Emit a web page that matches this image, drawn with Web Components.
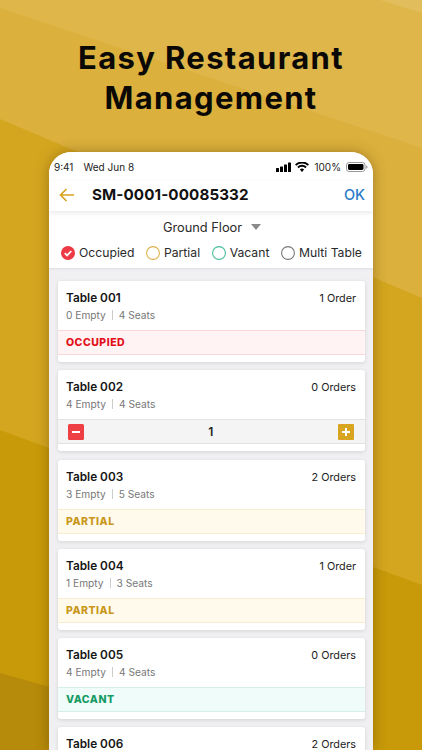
<!DOCTYPE html>
<html>
<head>
<meta charset="utf-8">
<style>
  html, body { margin: 0; padding: 0; height: 100%; overflow: hidden; }
  body { font-family: "Inter", "Liberation Sans", sans-serif; }
</style>
</head>
<body>
<promo-screen>
  <span slot="title">Easy Restaurant<br>Management</span>
  <phone-frame>
    <status-bar></status-bar>
    <app-header code="SM-0001-00085332"></app-header>
    <floor-filter floor="Ground Floor"></floor-filter>
    <table-list>
      <table-card name="Table 001" orders="1 Order" empty="0 Empty" seats="4 Seats" state="occupied"></table-card>
      <table-card name="Table 002" orders="0 Orders" empty="4 Empty" seats="4 Seats" state="stepper"></table-card>
      <table-card name="Table 003" orders="2 Orders" empty="3 Empty" seats="5 Seats" state="partial"></table-card>
      <table-card name="Table 004" orders="1 Order" empty="1 Empty" seats="3 Seats" state="partial"></table-card>
      <table-card name="Table 005" orders="0 Orders" empty="4 Empty" seats="4 Seats" state="vacant"></table-card>
      <table-card name="Table 006" orders="2 Orders"></table-card>
    </table-list>
  </phone-frame>
</promo-screen>

<script>
class PromoScreen extends HTMLElement {
  constructor() {
    super();
    this.attachShadow({ mode: "open" });
    this.shadowRoot.innerHTML = `
      <style>
        :host { display: flex; flex-direction: column; align-items: center; position: relative; width: 422px; height: 750px; overflow: hidden; background: #c89a09; }
        svg { position: absolute; inset: 0; }
        h1 { position: relative; margin: 0; padding-top: 38px; height: 152px; box-sizing: border-box; text-align: center; font: 700 31px/40px "Inter", sans-serif; letter-spacing: 1.35px; color: #0b0905; }
        .phone { position: relative; }
      </style>
      <svg width="422" height="750" viewBox="0 0 422 750">
        <rect width="422" height="750" fill="#c89a09"/>
        <polygon points="0,0 422,0 422,585 0,430" fill="#d4a61f"/>
        <polygon points="0,0 422,0 422,298 0,119" fill="#dbb03c"/>
        <polygon points="0,8 0,0 422,0 422,148" fill="#deb64a"/>
        <polygon points="380,0 422,0 422,13" fill="#e2bd5c"/>
        <polygon points="0,673 60,690 60,750 0,750" fill="#b68a0a"/>
      </svg>
      <h1><slot name="title"></slot></h1>
      <div class="phone"><slot></slot></div>`;
  }
}

class PhoneFrame extends HTMLElement {
  constructor() {
    super();
    this.attachShadow({ mode: "open" });
    this.shadowRoot.innerHTML = `
      <style>
        :host { display: block; width: 324px; height: 598px; box-sizing: border-box; background: #f0f0f3; border-radius: 22px 22px 0 0; overflow: hidden; box-shadow: 0 0 14px rgba(80,50,0,.4); font-family: "Inter", "Liberation Sans", sans-serif; }
      </style>
      <slot></slot>`;
  }
}

class StatusBar extends HTMLElement {
  constructor() {
    super();
    this.attachShadow({ mode: "open" });
    this.shadowRoot.innerHTML = `
      <style>
        :host { display: flex; align-items: center; height: 29px; padding: 0 5px; box-sizing: border-box; background: #fff; font: 400 10px "Inter", sans-serif; color: #222; }
        .date { margin-left: 10px; }
        .right { margin-left: auto; display: flex; align-items: center; gap: 4px; }
        svg { display: block; }
      </style>
      <span>9:41</span><span class="date">Wed Jun 8</span>
      <div class="right">
        <svg width="15" height="10" viewBox="0 0 15 10"><rect x="0" y="6" width="3" height="4" rx=".6"/><rect x="4" y="4.5" width="3" height="5.5" rx=".6"/><rect x="8" y="2.5" width="3" height="7.5" rx=".6"/><rect x="12" y="0.5" width="3" height="9.5" rx=".6"/></svg>
        <svg width="14" height="10" viewBox="0 0 14 10"><path d="M7 10 4.900 7.600a3 3 0 0 1 4.200 0zM3.600 6.200 2.300 4.800a6.700 6.700 0 0 1 9.400 0l-1.300 1.400a4.900 4.900 0 0 0-6.800 0zM1.300 3.800 0 2.400a9.900 9.900 0 0 1 14 0l-1.300 1.400a8 8 0 0 0-11.400 0z"/></svg>
        <span style="margin-left:1px">100%</span>
        <svg width="22" height="10" viewBox="0 0 22 10" style="margin-left:1px"><rect x=".5" y=".5" width="18.500" height="9" rx="2.600" fill="none" stroke="#999"/><rect x="2" y="2" width="15.500" height="6" rx="1.400"/><path d="M20.200 3.300c.9.300 1.300 1 1.300 1.700s-.4 1.400-1.300 1.700z" fill="#999"/></svg>
      </div>`;
  }
}

class AppHeader extends HTMLElement {
  static get observedAttributes() { return ["code"]; }
  constructor() {
    super();
    this.attachShadow({ mode: "open" });
  }
  connectedCallback() { this.render(); }
  attributeChangedCallback() { this.render(); }
  render() {
    this.shadowRoot.innerHTML = `
      <style>
        :host { display: flex; align-items: center; position: relative; box-sizing: border-box; height: 30px; padding: 0 8px 3px 10px; background: #fff; box-shadow: 0 2px 5px rgba(0,0,0,.09); }
        svg { display: block; }
        .code { margin-left: 18px; font: 700 15.200px "Inter", sans-serif; color: #111; letter-spacing: .1px; }
        .ok { margin-left: auto; font: 500 14.500px "Inter", sans-serif; color: #2a7bc8; }
      </style>
      <svg width="15" height="14" viewBox="0 0 15 14" fill="none" stroke="#d9a521" stroke-width="1.700"><path d="M15 7H1.500M7.500 1 1.500 7l6 6"/></svg>
      <span class="code">${this.getAttribute("code") || ""}</span>
      <span class="ok">OK</span>`;
  }
}

class FloorFilter extends HTMLElement {
  constructor() {
    super();
    this.attachShadow({ mode: "open" });
  }
  connectedCallback() {
    const legend = [["Occupied", "#ee3a45", true], ["Partial", "#dcb04a"], ["Vacant", "#47bd9b"], ["Multi Table", "#777"]];
    this.shadowRoot.innerHTML = `
      <style>
        :host { display: block; height: 57px; background: #fff; font: 400 12.200px "Inter", sans-serif; color: #2a2a2a; box-shadow: 0 1px 2px rgba(0,0,0,.08); }
        .floor { display: flex; justify-content: center; align-items: center; gap: 9px; padding: 8px 0 0 2px; height: 16px; font-size: 12.800px; }
        .caret { width: 0; height: 0; border: 5.500px solid transparent; border-top: 6px solid #8a8a8a; border-bottom: 0; }
        .legend { display: flex; justify-content: space-between; padding: 10px 11px 0 12px; }
        .item { display: flex; align-items: center; gap: 4px; }
        svg { display: block; }
      </style>
      <div class="floor"><span>${this.getAttribute("floor")}</span><span class="caret"></span></div>
      <div class="legend">
        ${legend.map(([label, color, on]) => `
          <span class="item">
            <svg width="14" height="14" viewBox="0 0 14 14">
              ${on
                ? `<circle cx="7" cy="7" r="7" fill="${color}"/><path d="M3.800 7.200 6.100 9.400 10.300 5" fill="none" stroke="#fff" stroke-width="1.800"/>`
                : `<circle cx="7" cy="7" r="6.400" fill="none" stroke="${color}" stroke-width="1.100"/>`}
            </svg>${label}
          </span>`).join("")}
      </div>`;
  }
}

class TableList extends HTMLElement {
  constructor() {
    super();
    this.attachShadow({ mode: "open" });
    this.shadowRoot.innerHTML = `
      <style>
        :host { display: flex; flex-direction: column; gap: 8.300px; padding: 13px 8px 0 9px; }
      </style>
      <slot></slot>`;
  }
}

class TableCard extends HTMLElement {
  constructor() {
    super();
    this.attachShadow({ mode: "open" });
  }
  connectedCallback() {
    const state = this.getAttribute("state");
    const attr = (n) => this.getAttribute(n);
    // the last card runs off the bottom of the picture, only its first row shows
    let rest = "";
    if (state === "stepper") {
      rest = `<div class="strip stepper">
        <svg width="16" height="16" viewBox="0 0 16 16"><rect width="16" height="16" rx="1.500" fill="#ee3f45"/><path d="M4 8h8" stroke="#fff" stroke-width="2"/></svg>
        <span>1</span>
        <svg width="16" height="16" viewBox="0 0 16 16"><rect width="16" height="16" rx="1" fill="#d9a521"/><path d="M4 8h8M8 4v8" stroke="#fff" stroke-width="2"/></svg>
      </div>`;
    } else if (state) {
      rest = `<div class="strip ${state}">${state.toUpperCase()}</div>`;
    }
    const meta = attr("empty")
      ? `<div class="meta"><span>${attr("empty")}</span><span class="sep"></span><span>${attr("seats")}</span></div>`
      : "";
    this.shadowRoot.innerHTML = `
      <style>
        :host { display: block; flex: none; height: 81px; background: #fff; border-radius: 3px; box-shadow: 0 1px 4px rgba(0,0,0,.12); font-family: "Inter", sans-serif; overflow: hidden; }
        .top { display: flex; justify-content: space-between; align-items: baseline; padding: 10px 9px 0 8px; height: 16px; }
        .name { font-weight: 600; font-size: 11.800px; color: #151515; }
        .orders { font-size: 10.800px; color: #222; }
        .meta { display: flex; align-items: center; padding: 0 8px; height: 16px; margin-bottom: 7px; font-size: 10.200px; color: #777; }
        .sep { width: 1px; height: 10px; background: #ccc; margin: 0 6px; }
        .strip { box-sizing: border-box; height: 25px; padding: 0 8px; display: flex; align-items: center; font-weight: 800; font-size: 10.500px; letter-spacing: .5px; border-top: 1px solid; border-bottom: 1px solid; }
        .occupied { background: #fff3f3; color: #e3101b; border-color: #fbd7d8; }
        .partial { background: #fffaec; color: #c9971c; border-color: #f8edd0; }
        .vacant { background: #f0fcf9; color: #149a63; border-color: #d6efe7; }
        .stepper { background: #f4f4f4; color: #222; border-color: #e2e2e2; justify-content: space-between; padding: 0 11px 0 10px; font-size: 12px; font-weight: 600; }
      </style>
      <div class="top"><span class="name">${attr("name")}</span><span class="orders">${attr("orders")}</span></div>
      ${meta}
      ${rest}`;
  }
}

customElements.define("promo-screen", PromoScreen);
customElements.define("phone-frame", PhoneFrame);
customElements.define("status-bar", StatusBar);
customElements.define("app-header", AppHeader);
customElements.define("floor-filter", FloorFilter);
customElements.define("table-list", TableList);
customElements.define("table-card", TableCard);
</script>
</body>
</html>
